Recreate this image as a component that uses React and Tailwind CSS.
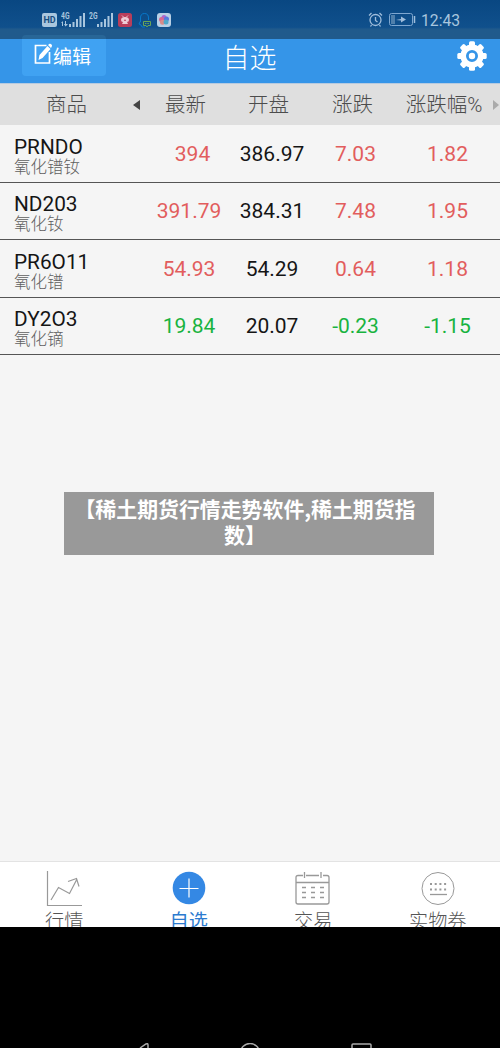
import clsx from 'clsx';

const QUOTES = [
  { code: 'PRNDO', name: '氧化镨钕', last: '394', open: '386.97', change: '7.03', percent: '1.82' },
  { code: 'ND203', name: '氧化钕', last: '391.79', open: '384.31', change: '7.48', percent: '1.95' },
  { code: 'PR6O11', name: '氧化镨', last: '54.93', open: '54.29', change: '0.64', percent: '1.18' },
  { code: 'DY2O3', name: '氧化镝', last: '19.84', open: '20.07', change: '-0.23', percent: '-1.15' },
];

function Signal({ label, arrows }) {
  return (
    <svg width="25" height="16" viewBox="0 0 25 16" fill="#a9c6de">
      <text x="0" y="6.500" fontSize="9" fontWeight="700" textLength="8.500" lengthAdjust="spacingAndGlyphs">{label}</text>
      {arrows && <path d="M0 11 2 9v5H1v-3zM4 9h1v3h2l-2.500 2.500L3 12h1z" />}
      <path d="M8 12h2v3H8zM11.500 10h2v5h-2zM15 7h2v8h-2zM18.500 4h2v11h-2zM22 1h2v14h-2z" />
    </svg>
  );
}

function StatusBar() {
  return (
    <div className="flex h-[39px] items-start bg-linear-to-b from-[#094782] from-0% via-[#10508c] via-70% to-[#205a8c] to-75% pt-3 text-[#a9c6de]">
      <div className="ml-[42px] mt-px flex h-[14px] w-[15px] items-center justify-center rounded-[2px] bg-[#a9c6de] text-[9px] font-bold leading-none text-[#174d7e]">
        HD
      </div>
      <div className="ml-[4px] w-[25px]"><Signal label="4G" arrows /></div>
      <div className="ml-[3px] w-[25px]"><Signal label="2G" /></div>
      <svg className="ml-[4px] mt-px" width="14" height="14" viewBox="0 0 14 14">
        <rect width="14" height="14" rx="2.500" fill="#b93e5b" />
        <path d="m4 2.500 2 2M10 2.500l-2 2" stroke="#e5c2d0" />
        <path d="M3 7q0-3 4-3t4 3q0 2-2 2l1 2H4l1-2Q3 9 3 7z" fill="#edcbd5" />
        <path d="m7 6 1 2H6z" fill="#b93e5b" />
      </svg>
      <svg className="ml-[6px] mt-px" width="14" height="15" viewBox="0 0 14 15" fill="none">
        <path d="M2.500 9V5q0-4.500 4-4.500t4 4.500v2M2.500 8 1 11l2 1 1 2h3" stroke="#0879ca" />
        <path d="M5.500 8.500h7v4H10l-1 1.500-1-1.500H5.500z" stroke="#69a657" />
        <path d="M7 10.500h4" stroke="#69a657" strokeDasharray="1 .6" />
      </svg>
      <svg className="ml-[5px] mt-px" width="14" height="14" viewBox="0 0 14 14">
        <rect width="14" height="14" rx="3" fill="#b9d0e5" />
        <circle cx="7" cy="4.500" r="2.500" fill="#aa66cd" />
        <circle cx="4.500" cy="6.500" r="2.500" fill="#d66892" />
        <circle cx="9.500" cy="6" r="2.500" fill="#5678dd" />
        <circle cx="5.500" cy="9.300" r="2.500" fill="#d88b89" />
        <circle cx="9" cy="9" r="2.500" fill="#4ea9cb" />
      </svg>
      <svg className="ml-[197px]" width="15" height="16" viewBox="0 0 15 16" fill="none" stroke="#9fbddb" strokeWidth="1.300">
        <circle cx="7.500" cy="8" r="5.500" />
        <path d="M7.500 5v3.500l2 1.500M1 3.500 3.500 1M14 3.500 11.500 1M3.500 13l-1 1.500M11.500 13l1 1.500" />
      </svg>
      <svg className="ml-[6px] mt-px" width="27" height="14" viewBox="0 0 27 14" fill="none">
        <rect x=".5" y=".5" width="23" height="12" rx="2" stroke="#7ea7d0" />
        <path d="M2 2h4v9H2z" fill="#4f7fab" />
        <path d="m7 7 5-1V3.500l5 3-5 3V7.500z" fill="#9fbddb" />
        <path d="M25.500 3v7" stroke="#9fbddb" strokeWidth="1.500" />
      </svg>
      <span className="ml-[5px] pt-px text-[15.7px] leading-4">12:43</span>
    </div>
  );
}

function Header() {
  return (
    <div className="grid h-11 grid-cols-[22px_84px_287px_107px] bg-[#3595e8] text-white">
      <button type="button" className="col-start-2 -mt-1 flex h-[41px] items-center rounded bg-linear-to-b from-[#286697] from-[4px] to-[#40a2f2] to-[4px] pl-[12px]">
        <svg className="-mt-1" width="19" height="22" viewBox="0 0 18 22">
          <path d="M12 2.500H1v17.500h14V9" fill="none" stroke="white" strokeWidth="1.700" />
          <path d="m4 17 1-5 8-9 3 3-8 9zM13.500 2 15 .800q1-.5 2 .6t.3 2L16.500 5z" fill="white" />
        </svg>
        <span className="pt-[4px] text-[19px] leading-6">编辑</span>
      </button>
      <h1 className="pt-[2px] text-center text-[27px] font-light leading-9">自选</h1>
      <svg className="ml-[64px] mt-[1.5px]" width="30" height="30" viewBox="-15 -15 30 30" fill="white">
        <circle r="8.800" fill="none" stroke="white" strokeWidth="5.600" />
        <circle r="3.200" />
        {[0, 45, 90, 135, 180, 225, 270, 315].map((angle) => (
          <rect key={angle} x="-3" y="-14.700" width="6" height="6" rx="1.500" transform={`rotate(${angle})`} />
        ))}
      </svg>
    </div>
  );
}

function ColumnTitles() {
  return (
    <div className="grid h-[42px] grid-cols-[133px_11px_83px_83px_85px_98px_7px] items-center border-t border-[#b7cbe0] bg-[#dfdfdf] pt-px text-center text-[20.5px] font-light text-[#4c4c4c]">
      <span>商品</span>
      <svg className="-mt-px" width="7" height="10" viewBox="0 0 7 10"><path d="m0 5 7-5v10z" fill="#444" /></svg>
      <span>最新</span>
      <span>开盘</span>
      <span>涨跌</span>
      <span>涨跌幅%</span>
      <svg className="-mt-px" width="6" height="10" viewBox="0 0 6 10"><path d="M0 0v10l6-5z" fill="#aaa" /></svg>
    </div>
  );
}

function QuoteRow({ quote }) {
  const falling = quote.change.startsWith('-');
  const tone = falling ? 'text-[#18b33f]' : 'text-[#e25d5d]';

  return (
    <div className="grid h-[57.5px] grid-cols-[147px_84px_82px_85px_99px] items-center border-b border-[#555] pt-[2px] text-center text-[21px] text-[#151515]">
      <div className="pl-[14px] pt-[5px] text-left">
        <p className="text-[20.8px] leading-[21px]">{quote.code}</p>
        <p className="text-[16.5px] font-light leading-[19px] text-[#606060]">{quote.name}</p>
      </div>
      <span className={clsx(tone, quote.last === '394' && 'pl-[7px]')}>{quote.last}</span>
      <span>{quote.open}</span>
      <span className={tone}>{quote.change}</span>
      <span className={tone}>{quote.percent}</span>
    </div>
  );
}

function ChartIcon() {
  return (
    <svg width="36" height="36" viewBox="0 0 36 36" fill="none" stroke="#999">
      <path d="M1.500 0v34.500H36M5 29l7.500-12.500 11 6L31 8M22 10.500l8.500-3 2.500 8" strokeWidth="1.200" />
    </svg>
  );
}

function PlusIcon() {
  return (
    <svg width="36" height="36" viewBox="0 0 36 36">
      <circle cx="18" cy="17" r="16.300" fill="#3488e4" />
      <path d="M8.500 17.500h19M18 7.500v19" stroke="white" strokeWidth="1.200" />
    </svg>
  );
}

function CalendarIcon() {
  return (
    <svg width="36" height="36" viewBox="0 0 36 36" fill="none" stroke="#999" strokeWidth="1.300">
      <path d="M8 4.500H3q-2 0-2 2V31q0 2 2 2h29q2 0 2-2V6.500q0-2-2-2h-4M11 4.500h13M9.500 1v6M26 1v6M1 11.500h33" />
      <path d="M7 16.500h4m5 0h4m5 0h4M7 21.500h4m5 0h4m5 0h4M7 26.500h4m5 0h4m5 0h4" />
    </svg>
  );
}

function VoucherIcon() {
  return (
    <svg width="36" height="36" viewBox="0 0 36 36" fill="none" stroke="#999">
      <circle cx="18" cy="17.500" r="16" />
      <path d="M10 13h18M10 18.500h18" strokeWidth="2" strokeDasharray="2 2.700" />
      <path d="M10 23.500h17" strokeWidth="1.300" />
    </svg>
  );
}

const TABS = [
  { label: '行情', Icon: ChartIcon },
  { label: '自选', Icon: PlusIcon, active: true },
  { label: '交易', Icon: CalendarIcon },
  { label: '实物券', Icon: VoucherIcon },
];

function TabBar() {
  return (
    <nav className="grid h-[66px] grid-cols-4 overflow-hidden border-t border-[#e3e3e3] bg-white pl-[2px]">
      {TABS.map(({ label, Icon, active }) => (
        <button key={label} type="button" className="flex flex-col items-center pt-[9px]">
          <Icon />
          <span className={clsx('mt-[2px] text-[19.2px] leading-[26px]', active ? 'text-[#2c7bcf]' : 'font-light text-[#555]')}>
            {label}
          </span>
        </button>
      ))}
    </nav>
  );
}

export default function App() {
  return (
    <div className="relative flex h-[1048px] w-[500px] flex-col overflow-hidden bg-[#f5f5f5] font-[Roboto,'Noto_Sans_CJK_SC',sans-serif]">
      <StatusBar />
      <Header />
      <ColumnTitles />
      <main className="flex-1">
        {QUOTES.map((quote) => (
          <QuoteRow key={quote.code} quote={quote} />
        ))}
      </main>
      <TabBar />
      <div className="flex h-[121px] items-end bg-black">
        <svg width="500" height="5" viewBox="0 0 500 5" fill="none" stroke="#aaa" strokeWidth="1.500">
          <path d="m140 5 6-4q2-1 2 1v3" />
          <circle cx="250" cy="10" r="9.500" />
          <path d="M352 5V2q0-1 1-1h17q1 0 1 1v3" />
        </svg>
      </div>
      <p className="absolute left-16 top-[492px] h-[63px] w-[370px] bg-[#999] pl-1 pr-3 pt-[3px] text-center font-['Noto_Sans_CJK_SC',sans-serif] text-[20.9px] font-bold leading-[26px] text-white">
        【稀土期货行情走势软件,稀土期货指数】
      </p>
    </div>
  );
}
